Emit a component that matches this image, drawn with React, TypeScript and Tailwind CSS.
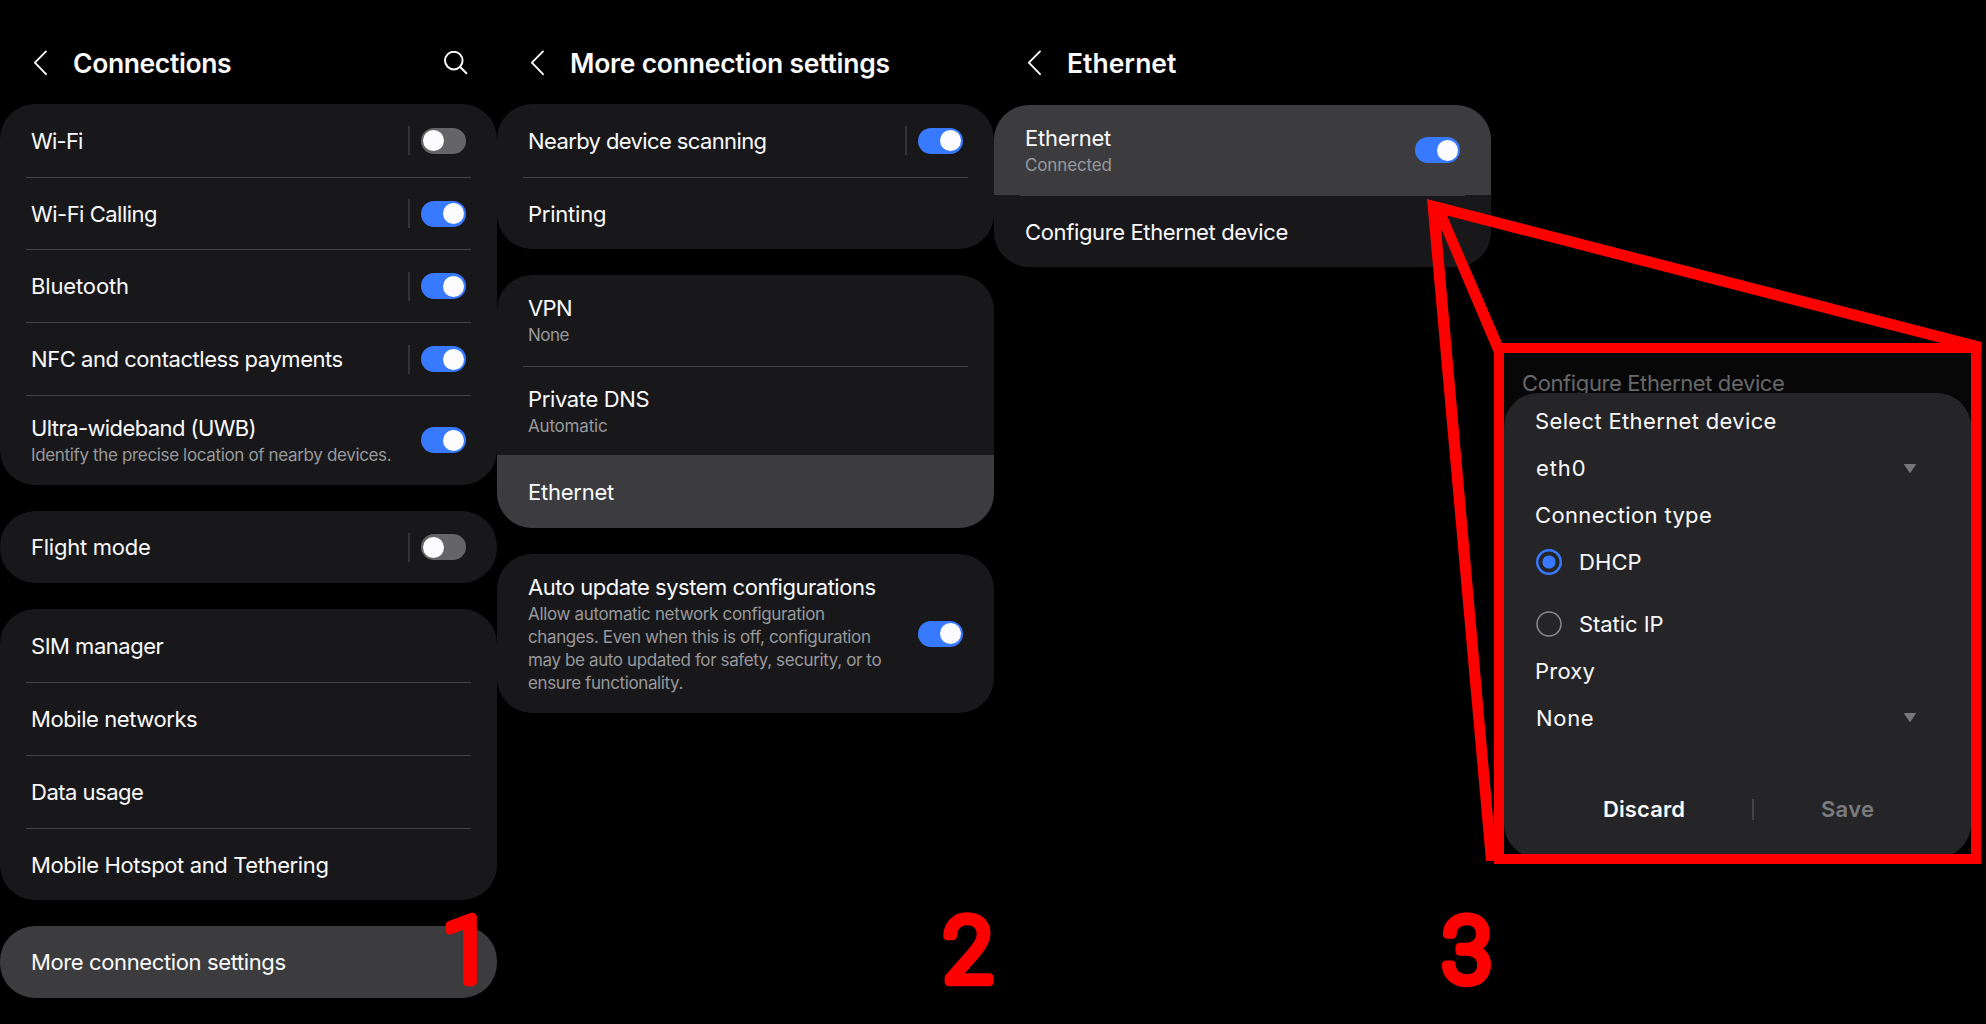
import type { ReactNode } from "react";
import clsx from "clsx";

function Toggle({ on }: { on: boolean }) {
  return (
    <div
      className={clsx(
        "flex h-[26px] w-[45px] shrink-0 items-center rounded-full",
        on ? "justify-end bg-[#387aff] pr-[2px]" : "justify-start bg-[#656569] pl-[2px]",
      )}
    >
      <div className="size-[21px] rounded-full bg-[#fcfcff]" />
    </div>
  );
}

function Divider() {
  return <div className="mx-[26px] h-px shrink-0 bg-[#434345]" />;
}

type RowProps = {
  label: string;
  track: string;
  height: string;
  sub?: ReactNode;
  toggle?: boolean;
  split?: boolean;
};

function Row({ label, track, height, sub, toggle, split }: RowProps) {
  return (
    <div className={clsx("flex shrink-0 items-center justify-between pr-[31px] pl-[31px]", height)}>
      <div className={clsx("whitespace-nowrap", sub && "pb-[1.5px]")}>
        <div className={clsx("text-[22px] leading-8 text-[#fafafc]", track)}>{label}</div>
        {sub}
      </div>
      {toggle !== undefined && (
        <div className="flex items-center gap-[11px]">
          {split && <div className="h-[29px] w-[2px] bg-[#353537]" />}
          <Toggle on={toggle} />
        </div>
      )}
    </div>
  );
}

function Sub({ children, track }: { children: string; track: string }) {
  return <div className={clsx("text-[17px] leading-[23px] text-[#98989c]", track)}>{children}</div>;
}

function Card({ children, tone = "bg-[#18181a]", gap }: { children: ReactNode; tone?: string; gap?: string }) {
  return (
    <section className={clsx("flex shrink-0 flex-col overflow-hidden rounded-[35px]", tone, gap)}>
      {children}
    </section>
  );
}

function Header({ title, track, search }: { title: string; track: string; search?: boolean }) {
  return (
    <header className="flex h-[104px] shrink-0 items-center pt-[22px] pr-[29px] pl-[32px]">
      <svg className="h-[26px] w-4" viewBox="0 0 16 26" fill="none" stroke="#fafafc" strokeWidth="1.9">
        <path d="M14 1.4 2.9 12.6 14 24.2" strokeLinecap="round" strokeLinejoin="round" />
      </svg>
      <h1 className={clsx("ml-[25px] text-[26.5px] leading-8 font-semibold text-[#fafafc]", track)}>{title}</h1>
      {search && (
        <svg className="ml-auto size-6" viewBox="0 0 24 24" fill="none" stroke="#fafafc" strokeWidth="2">
          <circle cx="9.8" cy="9.6" r="8.8" />
          <path d="M16.200 16 22.400 22.300" strokeLinecap="round" />
        </svg>
      )}
    </header>
  );
}

function Column({ children }: { children: ReactNode }) {
  return <div className="flex w-[497px] shrink-0 flex-col">{children}</div>;
}

function Field({ label, track, height }: { label: string; track: string; height: string }) {
  return (
    <div className={clsx("flex shrink-0 items-center pl-[31px]", height)}>
      <span className={clsx("text-[22px] leading-8", track)}>{label}</span>
    </div>
  );
}

function Dropdown({ value, track, height }: { value: string; track: string; height: string }) {
  return (
    <div className={clsx("flex shrink-0 items-center justify-between pr-[55px] pl-8", height)}>
      <span className={clsx("text-[22px] leading-8", track)}>{value}</span>
      <svg className="h-[9px] w-3" viewBox="0 0 12 9" fill="#77777a">
        <path d="M0 .6Q0 0 .6 0H11.4Q12 0 12 .6L6.6 8.6Q6 9 5.4 8.6Z" />
      </svg>
    </div>
  );
}

function Radio({ label, track, checked, height }: { label: string; track: string; checked: boolean; height: string }) {
  return (
    <div className={clsx("flex shrink-0 items-center pl-8", height)}>
      <svg className="size-[26px]" viewBox="0 0 26 26" fill="none">
        {checked ? (
          <>
            <circle cx="13" cy="13" r="11.8" stroke="#387aff" strokeWidth="2.4" />
            <circle cx="13" cy="13" r="6.6" fill="#387aff" />
          </>
        ) : (
          <circle cx="13" cy="13" r="12" stroke="#8a8a8d" strokeWidth="1.5" />
        )}
      </svg>
      <span className={clsx("ml-[17px] text-[22px] leading-8", track)}>{label}</span>
    </div>
  );
}

/* Configuration dialog framed in red, hanging over the third screen. */
function Callout() {
  return (
    <div className="absolute top-[343px] left-[1494px] flex h-[521px] w-[487px] flex-col overflow-hidden border-[10px] border-[#ff0000] bg-black">
      <div className="h-[41px] shrink-0 bg-[#070707] pt-[14px] pl-[18px] text-[22px] leading-8 tracking-[-0.39px] whitespace-nowrap text-[#68686a]">
        Configure Ethernet device
      </div>
      <div className="-mt-px flex h-[465px] shrink-0 flex-col bg-[linear-gradient(#070707_50%,#000_50%)]">
        <div className="flex h-[465px] flex-col rounded-[34px] bg-[#252527] text-[#fafafc]">
          <Field label="Select Ethernet device" track="tracking-[0.35px]" height="h-[56px]" />
          <Dropdown value="eth0" track="tracking-[0.9px]" height="h-[38px]" />
          <Field label="Connection type" track="tracking-[0.35px]" height="h-[56px]" />
          <Radio label="DHCP" track="tracking-[0.1px]" checked height="h-[38px]" />
          <div className="h-6" />
          <Radio label="Static IP" track="tracking-[-0.05px]" checked={false} height="h-[38px]" />
          <Field label="Proxy" track="tracking-[0.21px]" height="h-[56px]" />
          <Dropdown value="None" track="tracking-[0.7px]" height="h-[37px]" />
          <div className="mt-[57px] flex h-8 items-center text-[22px] leading-8 font-semibold">
            <span className="w-[279px] pl-[99px] tracking-[0.1px]">Discard</span>
            <span className="ml-[-31px] h-[21px] w-[2px] bg-[#444446]" />
            <span className="ml-[67px] tracking-[0.3px] text-[#7b7b7f]">Save</span>
          </div>
        </div>
      </div>
    </div>
  );
}

function Annotations() {
  return (
    <svg className="pointer-events-none absolute inset-0 h-[1024px] w-[1986px]" viewBox="0 0 1986 1024" fill="#ff0000">
      <path d="M1427 199 1981.5 342V353H1941V343L1447 215.5 1502 343V353H1494L1441 228 1494 829V861H1486Z" />
      <g
        fontFamily="Roboto, sans-serif"
        fontSize="91"
        fontWeight="300"
        stroke="#ff0000"
        strokeWidth="8.5"
        strokeLinejoin="round"
        textAnchor="middle"
      >
        <text x="467" y="982">
          1
        </text>
        <text x="968" y="982">
          2
        </text>
        <text x="1467" y="982">
          3
        </text>
      </g>
    </svg>
  );
}

export default function App() {
  return (
    <main className="relative flex h-[1024px] w-[1986px] overflow-hidden bg-black font-['Inter',sans-serif]">
      <Column>
        <Header title="Connections" track="tracking-[-0.38px]" search />
        <Card>
          <Row label="Wi-Fi" track="tracking-[-0.75px]" height="h-[73px]" toggle={false} split />
          <Divider />
          <Row label="Wi-Fi Calling" track="tracking-[-0.5px]" height="h-[71px]" toggle split />
          <Divider />
          <Row label="Bluetooth" track="tracking-[-0.14px]" height="h-[72px]" toggle split />
          <Divider />
          <Row label="NFC and contactless payments" track="tracking-[-0.45px]" height="h-[72px]" toggle split />
          <Divider />
          <Row
            label="Ultra-wideband (UWB)"
            track="tracking-[-0.59px]"
            height="h-[88px] mb-px"
            sub={<Sub track="tracking-[-0.35px]">Identify the precise location of nearby devices.</Sub>}
            toggle
          />
        </Card>
        <Card gap="mt-[26px]">
          <Row label="Flight mode" track="tracking-[-0.25px]" height="h-[72px]" toggle={false} split />
        </Card>
        <Card gap="mt-[26px]">
          <Row label="SIM manager" track="tracking-[-0.49px]" height="h-[73px]" />
          <Divider />
          <Row label="Mobile networks" track="tracking-[-0.43px]" height="h-[72px]" />
          <Divider />
          <Row label="Data usage" track="tracking-[-0.5px]" height="h-[72px]" />
          <Divider />
          <Row label="Mobile Hotspot and Tethering" track="tracking-[-0.38px]" height="h-[71px]" />
        </Card>
        <Card gap="mt-[26px]" tone="bg-[#3c3c3e]">
          <Row label="More connection settings" track="tracking-[-0.38px]" height="h-[72px]" />
        </Card>
      </Column>

      <Column>
        <Header title="More connection settings" track="tracking-[-0.24px]" />
        <Card>
          <Row label="Nearby device scanning" track="tracking-[-0.61px]" height="h-[73px]" toggle split />
          <Divider />
          <Row label="Printing" track="tracking-[-0.22px]" height="h-[71px]" />
        </Card>
        <Card gap="mt-[26px]">
          <Row
            label="VPN"
            track="tracking-[-0.6px]"
            height="h-[91px]"
            sub={<Sub track="tracking-[-0.5px]">None</Sub>}
          />
          <Divider />
          <Row
            label="Private DNS"
            track="tracking-[-0.35px]"
            height="h-[88px]"
            sub={<Sub track="tracking-[-0.19px]">Automatic</Sub>}
          />
          <div className="bg-[#3c3c3e]">
            <Row label="Ethernet" track="tracking-[-0.24px]" height="h-[73px]" />
          </div>
        </Card>
        <Card gap="mt-[26px]">
          <Row
            label="Auto update system configurations"
            track="tracking-[-0.48px]"
            height="h-[159px]"
            sub={
              <>
                <Sub track="tracking-[-0.34px]">Allow automatic network configuration</Sub>
                <Sub track="tracking-[-0.39px]">changes. Even when this is off, configuration</Sub>
                <Sub track="tracking-[-0.38px]">may be auto updated for safety, security, or to</Sub>
                <Sub track="tracking-[-0.39px]">ensure functionality.</Sub>
              </>
            }
            toggle
          />
        </Card>
      </Column>

      <Column>
        <Header title="Ethernet" track="tracking-[0px]" />
        <Card gap="mt-px">
          <div className="bg-[#3c3c3e]">
            <Row
              label="Ethernet"
              track="tracking-[-0.24px]"
              height="h-[90px]"
              sub={<Sub track="tracking-[-0.14px]">Connected</Sub>}
              toggle
            />
          </div>
          <div className="mx-[26px] h-px bg-[#3c3c3e]" />
          <Row label="Configure Ethernet device" track="tracking-[-0.37px]" height="h-[71px]" />
        </Card>
      </Column>

      <Callout />
      <Annotations />
    </main>
  );
}
